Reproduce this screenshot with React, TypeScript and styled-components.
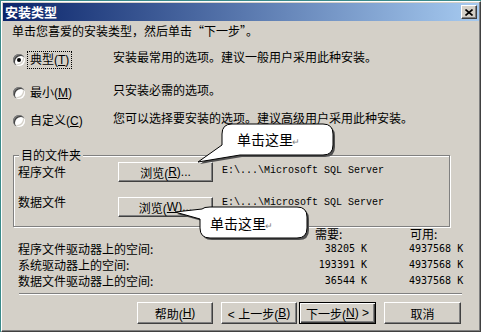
import React from "react";
import styled, { createGlobalStyle } from "styled-components";

const UI = `"Liberation Sans", "Noto Sans CJK SC", sans-serif`;
const CJK = `"Noto Sans CJK SC", sans-serif`;

const Global = createGlobalStyle`
  html, body { margin: 0; padding: 0; background: #3a8a8a; }
  body { width: 481px; height: 332px; overflow: hidden; }
`;

const Page = styled.div`
  position: relative;
  width: 481px;
  height: 332px;
`;

const Frame = styled.div`
  width: 481px;
  height: 332px;
  box-sizing: border-box;
  border-top: 1px solid #3a8a8a;
  border-left: 1px solid #3a8a8a;
`;

const Window = styled.div`
  width: 100%;
  height: 100%;
  box-sizing: border-box;
  background: #d4d0c8;
  border: 1px solid;
  border-color: #ffffff #404040 #404040 #ffffff;
  box-shadow: inset -1px -1px 0 #808080;
  padding: 1px;
  display: flex;
  flex-direction: column;
  font-family: ${UI};
  font-size: 12px;
  color: #000;
`;

const TitleBar = styled.div`
  height: 18px;
  flex: none;
  display: flex;
  align-items: center;
  justify-content: space-between;
  background: linear-gradient(to right, #0a246a, #a6caf0);
  padding-left: 2px;
`;

const TitleText = styled.span`
  color: #fff;
  font-family: ${CJK};
  font-weight: bold;
  font-size: 13px;
  line-height: 18px;
`;

const CloseBtn = styled.div`
  width: 16px;
  height: 14px;
  margin-right: 2px;
  box-sizing: border-box;
  background: #d4d0c8;
  border: 1px solid;
  border-color: #ffffff #404040 #404040 #ffffff;
  box-shadow: inset -1px -1px 0 #808080;
  display: flex;
  align-items: center;
  justify-content: center;
`;

const Body = styled.div`
  flex: 1;
  display: flex;
  flex-direction: column;
`;

const Header = styled.div`
  margin: 3px 0 0 9px;
  line-height: 14px;
  height: 14px;
  font-family: ${CJK};
`;

const Options = styled.div`
  margin-top: 12px;
  padding-left: 10px;
  display: flex;
  flex-direction: column;
`;

const OptionRow = styled.div<{ $h: number }>`
  display: grid;
  grid-template-columns: 100px 1fr;
  height: ${(p) => p.$h}px;
`;

const RadioCell = styled.div<{ $off: number }>`
  display: flex;
  align-items: center;
  margin-top: ${(p) => p.$off}px;
  height: 18px;
`;

const Radio = styled.span<{ $checked?: boolean }>`
  width: 12px;
  height: 12px;
  border-radius: 50%;
  background: #fff;
  box-shadow: inset 1px 1px 0 #808080, inset 2px 2px 0 #404040,
    inset -1px -1px 0 #ffffff, inset -2px -2px 0 #d4d0c8;
  display: flex;
  align-items: center;
  justify-content: center;
  flex: none;
  &::after {
    content: "";
    width: 4px;
    height: 4px;
    border-radius: 50%;
    background: ${(p) => (p.$checked ? "#000" : "transparent")};
  }
`;

const RadioLabel = styled.span<{ $focus?: boolean }>`
  margin-left: 2px;
  padding: 1px 2px;
  line-height: 14px;
  border: 1px dotted ${(p) => (p.$focus ? "#000" : "transparent")};
  font-family: ${UI};
`;

const Desc = styled.div`
  line-height: 14px;
  font-family: ${CJK};
`;

const U = styled.span`
  text-decoration: underline;
`;

const Group = styled.fieldset`
  margin: 13px 0 0 10px;
  width: 437px;
  box-sizing: border-box;
  padding: 0 4px 9px 4px;
  border: 1px solid #808080;
  box-shadow: 1px 1px 0 #ffffff, inset 1px 1px 0 #ffffff;
  min-width: 0;
`;

const Legend = styled.legend`
  padding: 0 2px;
  margin-left: 1px;
  line-height: 14px;
  font-size: 12px;
  font-family: ${CJK};
  background: #d4d0c8;
`;

const FolderRow = styled.div<{ $mt: number }>`
  display: flex;
  align-items: flex-start;
  height: 20px;
  margin-top: ${(p) => p.$mt}px;
`;

const FolderLabel = styled.div<{ $off: number }>`
  width: 100px;
  line-height: 14px;
  margin-top: ${(p) => p.$off}px;
  font-family: ${CJK};
`;

const Btn = styled.div<{ $w: number; $h: number; $default?: boolean }>`
  width: ${(p) => p.$w}px;
  height: ${(p) => p.$h}px;
  box-sizing: border-box;
  flex: none;
  display: flex;
  align-items: center;
  justify-content: center;
  background: #d4d0c8;
  border: 1px solid;
  border-color: ${(p) =>
    p.$default ? "#000" : "#ffffff #404040 #404040 #ffffff"};
  box-shadow: ${(p) =>
    p.$default
      ? "inset 1px 1px 0 #ffffff, inset -1px -1px 0 #404040, inset -2px -2px 0 #808080"
      : "inset -1px -1px 0 #808080"};
  font-family: ${UI};
  font-size: 12px;
  white-space: pre;
`;

const PathText = styled.div<{ $off: number }>`
  margin-left: 9px;
  margin-top: ${(p) => p.$off}px;
  line-height: 14px;
  font-family: "Liberation Mono", monospace;
  font-size: 10px;
`;

const DiskGrid = styled.div`
  display: grid;
  grid-template-columns: 297px 52px 43px 70px;
  grid-template-rows: 14px 16px 16px 16px;
  padding-left: 15px;
  align-items: center;
`;

const Cell = styled.div<{ $right?: boolean; $mono?: boolean }>`
  line-height: 14px;
  text-align: ${(p) => (p.$right ? "right" : "left")};
  white-space: pre;
  font-family: ${(p) => (p.$mono ? `"DejaVu Sans Mono", monospace` : CJK)};
  font-size: ${(p) => (p.$mono ? "10px" : "12px")};
`;

const AvailCell = styled(Cell)`
  margin-left: -1px;
`;

const Separator = styled.div`
  margin: 4px 0 0 16px;
  width: 443px;
  border-top: 1px solid #808080;
  border-bottom: 1px solid #ffffff;
`;

const ButtonRow = styled.div`
  margin-top: 7px;
  display: flex;
  justify-content: flex-end;
  padding-right: 18px;
`;

const Gap = styled.span<{ $w: number }>`
  width: ${(p) => p.$w}px;
  flex: none;
`;

const Overlay = styled.svg`
  position: absolute;
  left: 0;
  top: 0;
  pointer-events: none;
`;

const bubble1 =
  "M232,124 H323 Q333,124 333,134 V145 Q333,155 323,155 H240 L198,162 L222,145 V134 Q222,124 232,124 Z";
const bubble2 =
  "M210,207 H297 Q307,207 307,217 V228 Q307,238 297,238 H210 Q200,238 200,228 V219 L175,212 L202,209 Q204,207 210,207 Z";

const disk = [
  ["程序文件驱动器上的空间:", "38205 K", "4937568 K"],
  ["系统驱动器上的空间:", "193391 K", "4937568 K"],
  ["数据文件驱动器上的空间:", "36544 K", "4937568 K"],
];

export default function App() {
  return (
    <Page>
      <Global />
      <Frame>
        <Window>
          <TitleBar>
            <TitleText>安装类型</TitleText>
            <CloseBtn>
              <svg width="8" height="7" viewBox="0 0 8 7">
                <path d="M0.5,0.5 L7.5,6.5 M7.5,0.5 L0.5,6.5" stroke="#000" strokeWidth="1.6" />
              </svg>
            </CloseBtn>
          </TitleBar>
          <Body>
            <Header>单击您喜爱的安装类型，然后单击“下一步”。</Header>
            <Options>
              <OptionRow $h={33}>
                <RadioCell $off={1}>
                  <Radio $checked />
                  <RadioLabel $focus>
                    典型(<U>T</U>)
                  </RadioLabel>
                </RadioCell>
                <Desc>安装最常用的选项。建议一般用户采用此种安装。</Desc>
              </OptionRow>
              <OptionRow $h={28}>
                <RadioCell $off={1}>
                  <Radio />
                  <RadioLabel>
                    最小(<U>M</U>)
                  </RadioLabel>
                </RadioCell>
                <Desc>只安装必需的选项。</Desc>
              </OptionRow>
              <OptionRow $h={24}>
                <RadioCell $off={1}>
                  <Radio />
                  <RadioLabel>
                    自定义(<U>C</U>)
                  </RadioLabel>
                </RadioCell>
                <Desc>您可以选择要安装的选项。建议高级用户采用此种安装。</Desc>
              </OptionRow>
            </Options>
            <Group>
              <Legend>目的文件夹</Legend>
              <FolderRow $mt={0}>
                <FolderLabel $off={3}>程序文件</FolderLabel>
                <Btn $w={95} $h={20}>
                  浏览(<U>R</U>)...
                </Btn>
                <PathText $off={2}>E:\...\Microsoft SQL Server</PathText>
              </FolderRow>
              <FolderRow $mt={15}>
                <FolderLabel $off={-2}>数据文件</FolderLabel>
                <Btn $w={95} $h={20}>
                  浏览(<U>W</U>)...
                </Btn>
                <PathText $off={-1}>E:\...\Microsoft SQL Server</PathText>
              </FolderRow>
            </Group>
            <DiskGrid>
              <Cell />
              <Cell>需要:</Cell>
              <Cell />
              <Cell>可用:</Cell>
              {disk.map(([label, need, avail]) => (
                <React.Fragment key={label}>
                  <Cell>{label}</Cell>
                  <Cell $right $mono>
                    {need}
                  </Cell>
                  <Cell />
                  <AvailCell $mono>{avail}</AvailCell>
                </React.Fragment>
              ))}
            </DiskGrid>
            <Separator />
            <ButtonRow>
              <Btn $w={76} $h={22}>
                帮助(<U>H</U>)
              </Btn>
              <Gap $w={8} />
              <Btn $w={76} $h={22}>
                {"< 上一步("}
                <U>B</U>)
              </Btn>
              <Gap $w={2} />
              <Btn $w={77} $h={22} $default>
                下一步(<U>N</U>){" >"}
              </Btn>
              <Gap $w={8} />
              <Btn $w={77} $h={22}>
                取消
              </Btn>
            </ButtonRow>
          </Body>
        </Window>
      </Frame>
      <Overlay width="481" height="332" viewBox="0 0 481 332">
        <path d={bubble1} transform="translate(2,2)" fill="#505050" />
        <path d={bubble1} fill="#fff" stroke="#000" strokeWidth="1" />
        <text x="237" y="145" fontFamily={CJK} fontSize="14" fill="#000">
          单击这里
        </text>
        <text x="292" y="145" fontFamily={UI} fontSize="9" fill="#808080">
          ↵
        </text>
        <path d={bubble2} transform="translate(2,2)" fill="#505050" />
        <path d={bubble2} fill="#fff" stroke="#000" strokeWidth="1" />
        <text x="210" y="229" fontFamily={CJK} fontSize="14" fill="#000">
          单击这里
        </text>
        <text x="265" y="229" fontFamily={UI} fontSize="9" fill="#808080">
          ↵
        </text>
      </Overlay>
    </Page>
  );
}
